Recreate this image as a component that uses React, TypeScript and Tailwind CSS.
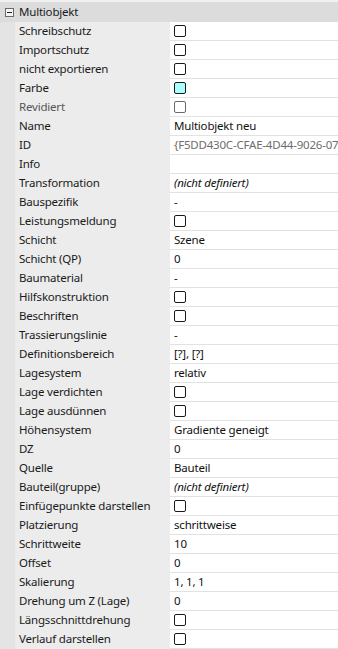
import type { ReactNode } from "react";

type Value =
  | { kind: "check"; fill?: string; muted?: boolean }
  | { kind: "text"; text: string; italic?: boolean; muted?: boolean };

type Row = { label: string; value: Value; mutedLabel?: boolean };

const t = (text: string, extra: Partial<Extract<Value, { kind: "text" }>> = {}): Value => ({
  kind: "text",
  text,
  ...extra,
});
const cb: Value = { kind: "check" };

const ROWS: Row[] = [
  { label: "Schreibschutz", value: cb },
  { label: "Importschutz", value: cb },
  { label: "nicht exportieren", value: cb },
  { label: "Farbe", value: { kind: "check", fill: "#aafefe" } },
  { label: "Revidiert", value: { kind: "check", muted: true }, mutedLabel: true },
  { label: "Name", value: t("Multiobjekt neu") },
  { label: "ID", value: t("{F5DD430C-CFAE-4D44-9026-07A3B1C2E5F4}", { muted: true }) },
  { label: "Info", value: t("") },
  { label: "Transformation", value: t("(nicht definiert)", { italic: true }) },
  { label: "Bauspezifik", value: t("-") },
  { label: "Leistungsmeldung", value: cb },
  { label: "Schicht", value: t("Szene") },
  { label: "Schicht (QP)", value: t("0") },
  { label: "Baumaterial", value: t("-") },
  { label: "Hilfskonstruktion", value: cb },
  { label: "Beschriften", value: cb },
  { label: "Trassierungslinie", value: t("-") },
  { label: "Definitionsbereich", value: t("[?], [?]") },
  { label: "Lagesystem", value: t("relativ") },
  { label: "Lage verdichten", value: cb },
  { label: "Lage ausdünnen", value: cb },
  { label: "Höhensystem", value: t("Gradiente geneigt") },
  { label: "DZ", value: t("0") },
  { label: "Quelle", value: t("Bauteil") },
  { label: "Bauteil(gruppe)", value: t("(nicht definiert)", { italic: true }) },
  { label: "Einfügepunkte darstellen", value: cb },
  { label: "Platzierung", value: t("schrittweise") },
  { label: "Schrittweite", value: t("10") },
  { label: "Offset", value: t("0") },
  { label: "Skalierung", value: t("1, 1, 1") },
  { label: "Drehung um Z (Lage)", value: t("0") },
  { label: "Längsschnittdrehung", value: cb },
  { label: "Verlauf darstellen", value: cb },
];

function CheckBox({ fill, muted }: { fill?: string; muted?: boolean }) {
  return (
    <span
      className={`block h-[12px] w-[12px] rounded-[2px] border ${
        muted ? "border-[#6a6a6a]" : "border-[#1a1a1a]"
      }`}
      style={{ backgroundColor: fill ?? "#ffffff" }}
    />
  );
}

function ValueCell({ value }: { value: Value }): ReactNode {
  if (value.kind === "check") return <CheckBox fill={value.fill} muted={value.muted} />;
  return (
    <span
      className={`whitespace-nowrap ${value.italic ? "italic" : ""} ${
        value.muted ? "text-[#6d6d6d]" : "text-[#111]"
      }`}
    >
      {value.text}
    </span>
  );
}

export default function App() {
  return (
    <div
      className="h-[649px] w-[338px] overflow-hidden bg-[#f0f0f0] pt-[2px] text-[11.5px] leading-none tracking-[-0.2px]"
      style={{ fontFamily: '"Noto Sans", "Open Sans", sans-serif' }}
    >
      <div className="flex h-[20px] items-center bg-[#dcdcdc]">
        <span className="ml-[5px] flex h-[9px] w-[9px] items-center justify-center border border-[#6b6b6b] bg-[#f4f4f4]">
          <span className="block h-px w-[5px] bg-[#222]" />
        </span>
        <span className="ml-[5px] text-[#1a1a1a]">Multiobjekt</span>
      </div>
      <div className="flex">
        <div className="w-[15px] shrink-0 bg-[#e4e4e4]" />
        <div className="flex-1">
          {ROWS.map((row) => (
            <div key={row.label} className="flex h-[19px]">
              <div
                className={`flex w-[155px] shrink-0 items-center bg-[#ececec] pl-[4px] pb-[1px] ${
                  row.mutedLabel ? "text-[#555]" : "text-[#1a1a1a]"
                }`}
              >
                {row.label}
              </div>
              <div className="flex min-w-0 flex-1 items-center overflow-hidden border-b border-[#e2e2e2] bg-white pl-[4px]">
                <ValueCell value={row.value} />
              </div>
            </div>
          ))}
        </div>
      </div>
    </div>
  );
}
